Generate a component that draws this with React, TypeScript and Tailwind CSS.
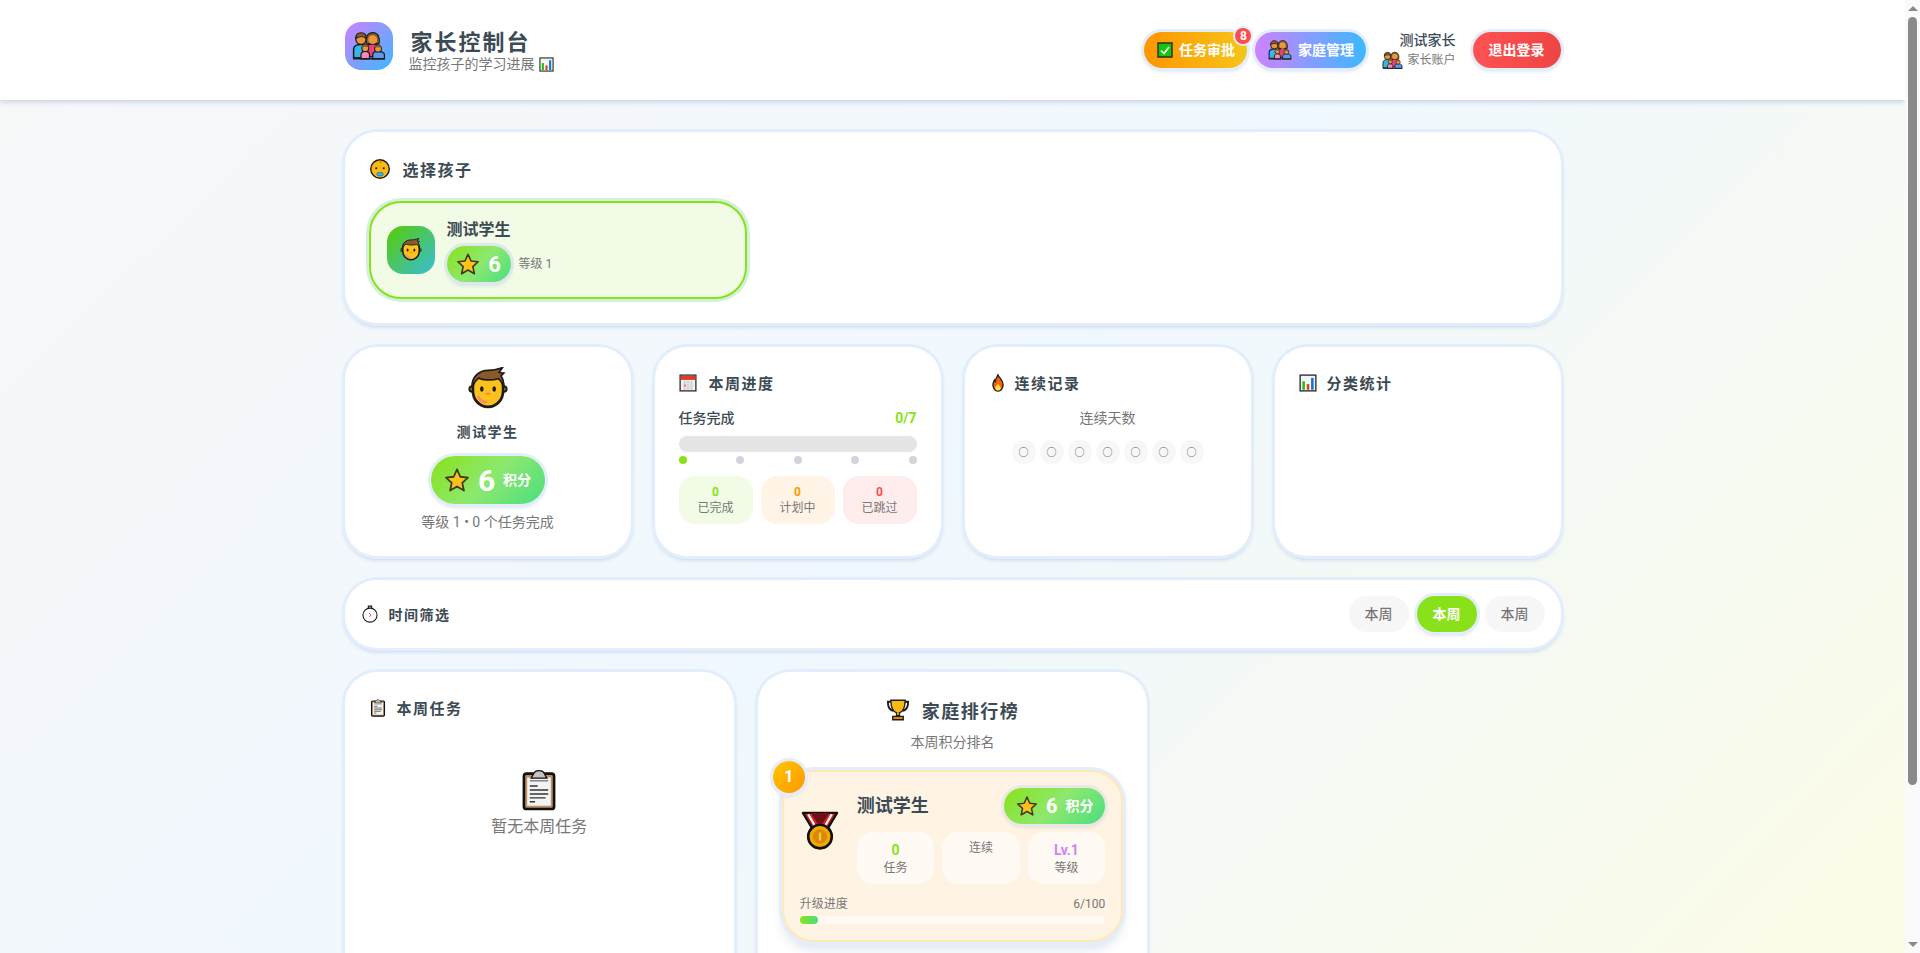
import React from "react";

// Emoji drawings, all on a 32 x 32 box
const Family = ({ size = 24 }: { size?: number }) => (
  <svg width={size} height={size} viewBox="0 0 32 32">
    <path d="M1.500 27v-8c0-3 3-4.500 7-4.500s6 1.500 6 4.500v8z" fill="#35b7ea" stroke="#1c1c1c" strokeWidth="1.400" />
    <circle cx="8.500" cy="9.500" r="5" fill="#e8973a" stroke="#1c1c1c" strokeWidth="1.200" />
    <path d="M3.500 9c0-4 2-5.500 5-5.500s5 1.500 5 5.500c-2-2-6-2.500-10 0z" fill="#8a5a2b" stroke="#1c1c1c" strokeWidth="1" />
    <path d="M13.500 26v-8c0-3 2.500-4 6-4s6 1 6 4v8z" fill="#e7427f" stroke="#1c1c1c" strokeWidth="1.400" />
    <path d="M13.500 14c-1-6 1-10.500 6-10.500s7 4.500 6 10.500z" fill="#8a5a2b" stroke="#1c1c1c" strokeWidth="1.200" />
    <circle cx="19.500" cy="10" r="4.200" fill="#e8973a" />
    <path d="M8.500 28v-4c0-2 2-3 4-3s4 1 4 3v4z" fill="#f58ab8" stroke="#1c1c1c" strokeWidth="1.200" />
    <circle cx="12.500" cy="18" r="3.200" fill="#e8973a" stroke="#1c1c1c" strokeWidth="1" />
    <path d="M9.300 17.500c0-2 1.500-3 3.200-3s3.200 1 3.200 3c-2-1-4.500-1-6.400 0z" fill="#8a5a2b" />
    <path d="M19.500 28v-4c0-2 2.500-3 5-3s6 1 6 3v4z" fill="#5c9bea" stroke="#1c1c1c" strokeWidth="1.200" />
    <circle cx="24.500" cy="18.500" r="3.200" fill="#e8973a" stroke="#1c1c1c" strokeWidth="1" />
    <path d="M21.300 18c0-2 1.500-3 3.200-3s3.200 1 3.200 3c-2-1-4.500-1-6.400 0z" fill="#8a5a2b" />
    <path d="M1 28h30" stroke="#1c1c1c" strokeWidth="1.400" />
  </svg>
);

const CheckBox = ({ size = 16 }: { size?: number }) => (
  <svg width={size} height={size} viewBox="0 0 32 32">
    <rect x="2" y="2" width="28" height="28" fill="#16c60c" stroke="#30301a" strokeWidth="3" />
    <path d="M8 17l6 6 10-13" fill="none" stroke="#fff" strokeWidth="3.200" />
  </svg>
);

const Chart = ({ size = 16 }: { size?: number }) => (
  <svg width={size} height={size} viewBox="0 0 32 32">
    <rect x="2" y="2" width="28" height="28" fill="#f4f4f4" stroke="#333" strokeWidth="2.500" />
    <rect x="6" y="13" width="4.500" height="15" fill="#16c60c" />
    <rect x="13.800" y="18" width="4.500" height="10" fill="#e8391d" />
    <rect x="21.500" y="7" width="4.500" height="21" fill="#0a78d7" />
  </svg>
);

const Baby = ({ size = 20 }: { size?: number }) => (
  <svg width={size} height={size} viewBox="0 0 32 32">
    <circle cx="16" cy="16" r="13.500" fill="#fcb813" stroke="#1c1c1c" strokeWidth="2" />
    <path d="M14 3c3 0 4 2 2.500 4" fill="none" stroke="#a8620f" strokeWidth="1.500" />
    <circle cx="10.500" cy="15" r="1.500" fill="#1c1c1c" />
    <circle cx="21.500" cy="15" r="1.500" fill="#1c1c1c" />
    <rect x="11.500" y="21" width="9" height="5" rx="2.500" fill="#35b7ea" stroke="#0a6e9c" strokeWidth="1" />
  </svg>
);

const Boy = ({ size = 24 }: { size?: number }) => (
  <svg width={size} height={size} viewBox="0 0 32 32">
    <circle cx="4.500" cy="16" r="2" fill="#fcb813" stroke="#1c1c1c" strokeWidth="1.500" />
    <circle cx="27.500" cy="16" r="2" fill="#fcb813" stroke="#1c1c1c" strokeWidth="1.500" />
    <path d="M5 14c0-7 5-10 11-10s11 3 11 10v3c0 7-5 12-11 12S5 24 5 17z" fill="#fcc21b" stroke="#1c1c1c" strokeWidth="2" />
    <path d="M4.500 15c-.5-8 5-12.500 11.500-12.500 3 0 6-.5 10.500-2l-2.500 3.500 3.500.5-2 2c1.500 2 2 5 2 8.500-1-3-2-5-4-6.500-5 1.500-12 1-14-.5-2.500 1.500-4 4-5 7z" fill="#8a5a2b" stroke="#1c1c1c" strokeWidth="1.200" />
    <ellipse cx="11.500" cy="16" rx="1.300" ry="2" fill="#1c1c1c" />
    <ellipse cx="20.500" cy="16" rx="1.300" ry="2" fill="#1c1c1c" />
    <path d="M9 22c1.500 2.500 3.500 3.500 5.500 3.500" fill="none" stroke="#f78f5f" strokeWidth="2" strokeLinecap="round" />
    <path d="M15 19.500h2" stroke="#f0883e" strokeWidth="1.500" strokeLinecap="round" />
  </svg>
);

const Star = ({ size = 20 }: { size?: number }) => (
  <svg width={size} height={size} viewBox="0 0 32 32">
    <path d="M16 3l4 9 9.500 1-7 6.500 2 9.500-8.500-5-8.500 5 2-9.500-7-6.500 9.500-1z" fill="#fcc21b" stroke="#3d3a1c" strokeWidth="2.200" strokeLinejoin="round" />
  </svg>
);

const Calendar = ({ size = 18 }: { size?: number }) => (
  <svg width={size} height={size} viewBox="0 0 32 32">
    <rect x="2" y="2" width="28" height="28" fill="#f2f2f2" stroke="#3a3a3a" strokeWidth="2.500" />
    <rect x="3.500" y="3.500" width="25" height="7" fill="#e8391d" />
    <path d="M7 14h18M7 18h18M7 22h18M7 26h18M10 12v16M16 12v16M22 12v16" stroke="#bdbdbd" strokeWidth="1" />
    <path d="M9 19l3 3m0-3l-3 3" stroke="#e8391d" strokeWidth="1.500" />
  </svg>
);

const Flame = ({ size = 18 }: { size?: number }) => (
  <svg width={size} height={size} viewBox="0 0 32 32">
    <path d="M16 1.500c1 5 9 8 9 17.500 0 6.500-4 11.500-9 11.500s-9-5-9-11.500c0-4 1.500-5.500 2.500-8 .5 1.500 1 2 1.500 2.500 .5-4 3-8 5-12z" fill="#f7630c" stroke="#1c1c1c" strokeWidth="2.400" />
    <path d="M16 17c.5 3 5 4.500 5 8 0 2.500-2.500 4.500-5 4.500s-5-2-5-4.500c0-3.500 4-5 5-8z" fill="#fde047" />
  </svg>
);

const Stopwatch = ({ size = 18 }: { size?: number }) => (
  <svg width={size} height={size} viewBox="0 0 32 32">
    <path d="M13 2h6v4h-6z" fill="#fff" stroke="#1c1c1c" strokeWidth="2" />
    <circle cx="16" cy="18" r="12.500" fill="#fff" stroke="#1c1c1c" strokeWidth="2" />
    <path d="M14 14l4 4-3 3" fill="none" stroke="#e8391d" strokeWidth="1.500" />
  </svg>
);

const Clipboard = ({ size = 18 }: { size?: number }) => (
  <svg width={size} height={size} viewBox="0 0 32 32">
    <rect x="4.500" y="3.500" width="23" height="27" rx="2" fill="#bd8f63" stroke="#111" strokeWidth="2" />
    <path d="M7 6.500h18v21.500h-18z" fill="#f3f3f3" />
    <path d="M12 3.500c1-3 7-3 8 0l2 3.500h-12z" fill="#c4c4c4" stroke="#111" strokeWidth="1" />
    <path d="M9 9h14" stroke="#8a8a8a" strokeWidth="1.200" />
    <path d="M9 13h6M9 16h14M9 19h14M9 22h12M9 25h4" stroke="#333" strokeWidth="1.100" />
  </svg>
);

const Trophy = ({ size = 24 }: { size?: number }) => (
  <svg width={size} height={size} viewBox="0 0 32 32">
    <path d="M7 5H2.500c0 7 2 11 7 12M25 5h4.500c0 7-2 11-7 12" fill="none" stroke="#1c1c1c" strokeWidth="2.500" />
    <path d="M6.500 3h19c0 9-2 15-7.500 16.500v4h-4v-4C8.500 18 6.500 12 6.500 3z" fill="#fcb813" stroke="#1c1c1c" strokeWidth="1.800" />
    <path d="M9 24.500h14v4.500H9z" fill="#e08a00" stroke="#1c1c1c" strokeWidth="1.800" />
  </svg>
);

const Medal = ({ size = 36 }: { size?: number }) => (
  <svg width={size} height={size} viewBox="0 0 32 32">
    <path d="M3 3h26l-9 15h-8z" fill="#d8232a" stroke="#111" strokeWidth="1.800" strokeLinejoin="round" />
    <path d="M9 3h14l-5 8h-4z" fill="#6e1014" />
    <path d="M7 4l7 12M25 4l-7 12" stroke="#fff" strokeWidth="1.600" />
    <circle cx="16" cy="21" r="9" fill="#f7a800" stroke="#111" strokeWidth="2" />
    <circle cx="16" cy="21" r="5.500" fill="#d98a00" />
    <path d="M16 18v6" stroke="#f7c54a" strokeWidth="1.800" />
  </svg>
);

const headingFont = "font-['Noto_Sans_CJK_SC',sans-serif]";

const CardTitle = ({ icon, gap = "gap-2", children }: { icon: React.ReactNode; gap?: string; children: React.ReactNode }) => (
  <div className={`flex items-center h-6 ${gap}`}>
    {icon}
    <h3 className={`${headingFont} text-[15px] font-bold tracking-[1.500px] text-[#3c4a54]`}>{children}</h3>
  </div>
);

// Scrollbar of the window
const Rail = () => (
  <div className="w-[15px] shrink-0 bg-[#fafafa] flex flex-col items-center">
    <div className="h-[17px] flex items-center justify-center">
      <div className="w-0 h-0 border-x-[5px] border-x-transparent border-b-[5px] border-b-[#8a8a8a]" />
    </div>
    <div className="w-[9px] h-[768px] bg-[#8a8a8a] rounded-full" />
    <div className="flex-1" />
    <div className="h-[17px] flex items-center justify-center">
      <div className="w-0 h-0 border-x-[5px] border-x-transparent border-t-[5px] border-t-[#8a8a8a]" />
    </div>
  </div>
);

export default function App() {
  const week = ["○", "○", "○", "○", "○", "○", "○"];

  return (
    <div className="flex h-screen overflow-hidden font-['Roboto','Noto_Sans_CJK_SC',sans-serif] text-[#3c4a54]">
      <div className="flex-1 min-w-0 overflow-hidden bg-[linear-gradient(135deg,#f7f7f7_0%,#f0f8ff_50%,#fbfbe6_100%)]">
        {/* Header */}
        <header className="bg-white shadow-[0_2px_5px_#c6d2e5]">
          <div className="max-w-7xl mx-auto px-8 h-[100px] flex items-center justify-between">
            <div className="flex items-center gap-4">
              <div className="w-12 h-12 mb-2 rounded-2xl bg-[linear-gradient(135deg,#ce82ff,#3cb8ff)] flex items-center justify-center">
                <Family size={34} />
              </div>
              <div>
                <h1 className={`${headingFont} pl-0.5 text-[22px] leading-7 font-bold tracking-[2px] text-[#3c4a54]`}>家长控制台</h1>
                <p className="text-sm text-[#777777] flex items-center gap-1 leading-5">
                  监控孩子的学习进展 <Chart size={15} />
                </p>
              </div>
            </div>
            <div className="flex items-center gap-2">
              <button className="relative h-9 w-[103px] rounded-full bg-[linear-gradient(90deg,#ff9600,#f5c518)] text-white text-sm font-bold flex items-center justify-center gap-1.5 shadow-[0_0_0_3px_#e4edfb,0_3px_4px_#d4deee]">
                <CheckBox size={16} />
                任务审批
                <span className="absolute -top-1 -right-[4px] w-4 h-4 rounded-full bg-[#ff4b4b] text-white text-xs font-bold flex items-center justify-center shadow-[0_0_0_2px_#e4edfb]">8</span>
              </button>
              <button className="h-9 w-[111px] rounded-full bg-[linear-gradient(90deg,#ce82ff,#3cb8ff)] text-white text-sm font-bold flex items-center justify-center gap-1.5 shadow-[0_0_0_3px_#e4edfb,0_3px_4px_#d4deee]">
                <Family size={24} />
                家庭管理
              </button>
              <div className="ml-2 flex flex-col items-end">
                <span className="text-sm leading-5 font-medium">测试家长</span>
                <span className="text-xs leading-4 text-[#777777] flex items-center gap-1">
                  <Family size={21} />
                  家长账户
                </span>
              </div>
              <button className="ml-[9px] h-9 w-[88px] rounded-full bg-[linear-gradient(90deg,#ff5252,#ee4444)] text-white text-sm font-bold shadow-[0_0_0_3px_#e4edfb,0_3px_4px_#d4deee]">
                退出登录
              </button>
            </div>
          </div>
        </header>

        <main className="max-w-7xl mx-auto px-8 py-8 flex flex-col gap-6">
          {/* Child picker */}
          <section className="bg-white rounded-[32px] p-6 shadow-[0_0_0_3px_#e3eefc,0_3px_4px_1px_#c8d5e8]">
            <div className="flex items-center gap-3 h-7 mb-[17px] -translate-y-px">
              <Baby size={22} />
              <h2 className={`${headingFont} text-base font-bold tracking-[1.500px]`}>选择孩子</h2>
            </div>
            <div className="grid grid-cols-3 gap-4">
              <div className="h-[98px] rounded-[32px] border-2 border-[#89e219] bg-[#f1fbe6] shadow-[0_0_0_3px_#d3f0dc] px-4 flex items-center gap-3">
                <div className="w-12 h-12 rounded-2xl bg-[linear-gradient(135deg,#58cc02,#38bdd8)] flex items-center justify-center">
                  <Boy size={24} />
                </div>
                <div>
                  <div className="text-base leading-6 font-bold">测试学生</div>
                  <div className="flex items-center gap-2 mt-1">
                    <div className="h-9 w-16 rounded-full bg-[linear-gradient(135deg,#89e219,#8de86e_50%,#4ade80)] text-white text-[22px] font-bold flex items-center justify-center gap-2 shadow-[0_0_0_3px_#dce8ea,0_3px_4px_#c9d5de]">
                      <Star size={24} />6
                    </div>
                    <span className="text-xs text-[#777777]">等级 1</span>
                  </div>
                </div>
              </div>
            </div>
          </section>

          {/* Stat cards */}
          <section className="grid grid-cols-4 gap-6 h-[209px]">
            <div className="bg-white rounded-[32px] pt-5 flex flex-col items-center shadow-[0_0_0_3px_#e3eefc,0_3px_4px_1px_#c8d5e8]">
              <Boy size={44} />
              <div className={`${headingFont} mt-2.5 text-sm leading-5 font-bold tracking-[1.500px]`}>测试学生</div>
              <div className="mt-[15px] h-12 w-[114px] rounded-full bg-[linear-gradient(135deg,#89e219,#8de86e_50%,#4ade80)] text-white flex items-center justify-center gap-2 shadow-[0_0_0_3px_#e4edfb,0_3px_4px_#d0dbec]">
                <Star size={26} />
                <span className="text-[30px] font-bold">6</span>
                <span className="text-sm font-bold">积分</span>
              </div>
              <div className="mt-2 text-sm leading-5 text-[#777777]">等级 1 • 0 个任务完成</div>
            </div>

            <div className="bg-white rounded-[32px] p-6 shadow-[0_0_0_3px_#e3eefc,0_3px_4px_1px_#c8d5e8]">
              <CardTitle icon={<Calendar size={18} />} gap="gap-3">本周进度</CardTitle>
              <div className="flex justify-between mt-[13px] text-sm leading-5 font-medium">
                <span>任务完成</span>
                <span className="font-bold text-[#89e219]">0/7</span>
              </div>
              <div className="h-4 mt-2 rounded-full bg-[#e5e5e5]" />
              <div className="flex justify-between mt-1">
                <div className="w-2 h-2 rounded-full bg-[#89e219]" />
                <div className="w-2 h-2 rounded-full bg-[#d1d5db]" />
                <div className="w-2 h-2 rounded-full bg-[#d1d5db]" />
                <div className="w-2 h-2 rounded-full bg-[#d1d5db]" />
                <div className="w-2 h-2 rounded-full bg-[#d1d5db]" />
              </div>
              <div className="grid grid-cols-3 gap-2 mt-3">
                <div className="h-12 rounded-2xl bg-[#f1fbe6] flex flex-col items-center justify-center">
                  <span className="text-xs leading-4 font-bold text-[#89e219]">0</span>
                  <span className="text-xs leading-4 text-[#777777]">已完成</span>
                </div>
                <div className="h-12 rounded-2xl bg-[#fff4e6] flex flex-col items-center justify-center">
                  <span className="text-xs leading-4 font-bold text-[#ff9600]">0</span>
                  <span className="text-xs leading-4 text-[#777777]">计划中</span>
                </div>
                <div className="h-12 rounded-2xl bg-[#ffeded] flex flex-col items-center justify-center">
                  <span className="text-xs leading-4 font-bold text-[#ff4b4b]">0</span>
                  <span className="text-xs leading-4 text-[#777777]">已跳过</span>
                </div>
              </div>
            </div>

            <div className="bg-white rounded-[32px] p-6 shadow-[0_0_0_3px_#e3eefc,0_3px_4px_1px_#c8d5e8]">
              <CardTitle icon={<Flame size={18} />}>连续记录</CardTitle>
              <div className="mt-[13px] text-center text-sm leading-5 text-[#777777]">连续天数</div>
              <div className="flex justify-center gap-1 mt-3">
                {week.map((d, i) => (
                  <div key={i} className="w-6 h-6 rounded-full bg-[#f7f7f7] text-[10px] text-[#555555] flex items-center justify-center">{d}</div>
                ))}
              </div>
            </div>

            <div className="bg-white rounded-[32px] p-6 shadow-[0_0_0_3px_#e3eefc,0_3px_4px_1px_#c8d5e8]">
              <CardTitle icon={<Chart size={18} />} gap="gap-2.5">分类统计</CardTitle>
            </div>
          </section>

          {/* Time filter */}
          <section className="bg-white rounded-[32px] h-[68px] px-4 flex items-center justify-between shadow-[0_0_0_3px_#e3eefc,0_3px_4px_1px_#c8d5e8]">
            <div className="flex items-center gap-2.5">
              <Stopwatch size={18} />
              <span className={`${headingFont} text-sm font-bold tracking-[1.500px]`}>时间筛选</span>
            </div>
            <div className="flex gap-2">
              <button className="w-[60px] h-9 rounded-full bg-[#f7f7f7] text-[#777777] text-sm font-medium">本周</button>
              <button className="w-[60px] h-9 rounded-full bg-[#89e219] text-white text-sm font-bold shadow-[0_0_0_3px_#e4edfb,0_3px_4px_#d0dbec]">本周</button>
              <button className="w-[60px] h-9 rounded-full bg-[#f7f7f7] text-[#777777] text-sm font-medium">本周</button>
            </div>
          </section>

          {/* Tasks and ranking */}
          <section className="grid grid-cols-3 gap-6">
            <div className="bg-white rounded-[32px] p-6 h-[400px] shadow-[0_0_0_3px_#e3eefc,0_3px_4px_1px_#c8d5e8]">
              <CardTitle icon={<Clipboard size={18} />} gap="gap-2.5">本周任务</CardTitle>
              <div className="mt-[49px] flex flex-col items-center">
                <Clipboard size={42} />
                <p className="mt-1 text-base leading-6 text-[#777777]">暂无本周任务</p>
              </div>
            </div>

            <div className="bg-white rounded-[32px] px-6 pt-6 h-[400px] shadow-[0_0_0_3px_#e3eefc,0_3px_4px_1px_#c8d5e8]">
              <div className="flex items-center justify-center gap-3 h-7">
                <Trophy size={24} />
                <h3 className={`${headingFont} text-lg font-bold tracking-[1.500px]`}>家庭排行榜</h3>
              </div>
              <p className="mt-2 text-center text-sm leading-5 text-[#777777]">本周积分排名</p>
              <div className="relative mt-[18px] h-[172px] rounded-[32px] border-2 border-[#ffe9b8] bg-[#fff4e4] shadow-[0_0_0_3px_#e4edfb,0_8px_12px_#dfe6ef] px-4 pt-4">
                <div className="absolute -top-[11px] -left-[11px] w-8 h-8 rounded-full bg-[linear-gradient(135deg,#ffc800,#ff9600)] text-white text-base font-bold flex items-center justify-center shadow-[0_0_0_3px_#e4edfb,0_3px_4px_#d0dbec]">1</div>
                <div className="flex gap-[15px]">
                  <div className="w-[42px] pt-[21px] -ml-px mr-px shrink-0"><Medal size={42} /></div>
                  <div className="flex-1 min-w-0">
                    <div className="flex items-center justify-between h-9">
                      <span className="text-lg font-bold">测试学生</span>
                      <div className="h-9 w-[101px] rounded-full bg-[linear-gradient(135deg,#89e219,#8de86e_50%,#4ade80)] text-white flex items-center justify-center gap-2 shadow-[0_0_0_3px_#e8e8e4,0_3px_4px_#d9d9d4]">
                        <Star size={22} />
                        <span className="text-xl font-bold">6</span>
                        <span className="text-sm font-bold">积分</span>
                      </div>
                    </div>
                    <div className="grid grid-cols-3 gap-2 mt-2">
                      <div className="h-[52px] rounded-2xl bg-[#fffaf3] pt-2 text-center">
                        <div className="text-sm leading-5 font-bold text-[#89e219]">0</div>
                        <div className="text-xs leading-4 text-[#777777]">任务</div>
                      </div>
                      <div className="h-[52px] rounded-2xl bg-[#fffaf3] pt-2 text-center">
                        <div className="text-xs leading-4 text-[#777777]">连续</div>
                      </div>
                      <div className="h-[52px] rounded-2xl bg-[#fffaf3] pt-2 text-center">
                        <div className="text-sm leading-5 font-bold text-[#ce82ff]">Lv.1</div>
                        <div className="text-xs leading-4 text-[#777777]">等级</div>
                      </div>
                    </div>
                  </div>
                </div>
                <div className="flex justify-between mt-3 text-xs leading-4 text-[#777777]">
                  <span>升级进度</span>
                  <span>6/100</span>
                </div>
                <div className="mt-1 h-2 rounded-full bg-[#fffaf3]">
                  <div className="h-2 rounded-full bg-[linear-gradient(90deg,#89e219,#4ade80)]" style={{ width: "6%" }} />
                </div>
              </div>
            </div>
          </section>
        </main>
      </div>
      <Rail />
    </div>
  );
}
